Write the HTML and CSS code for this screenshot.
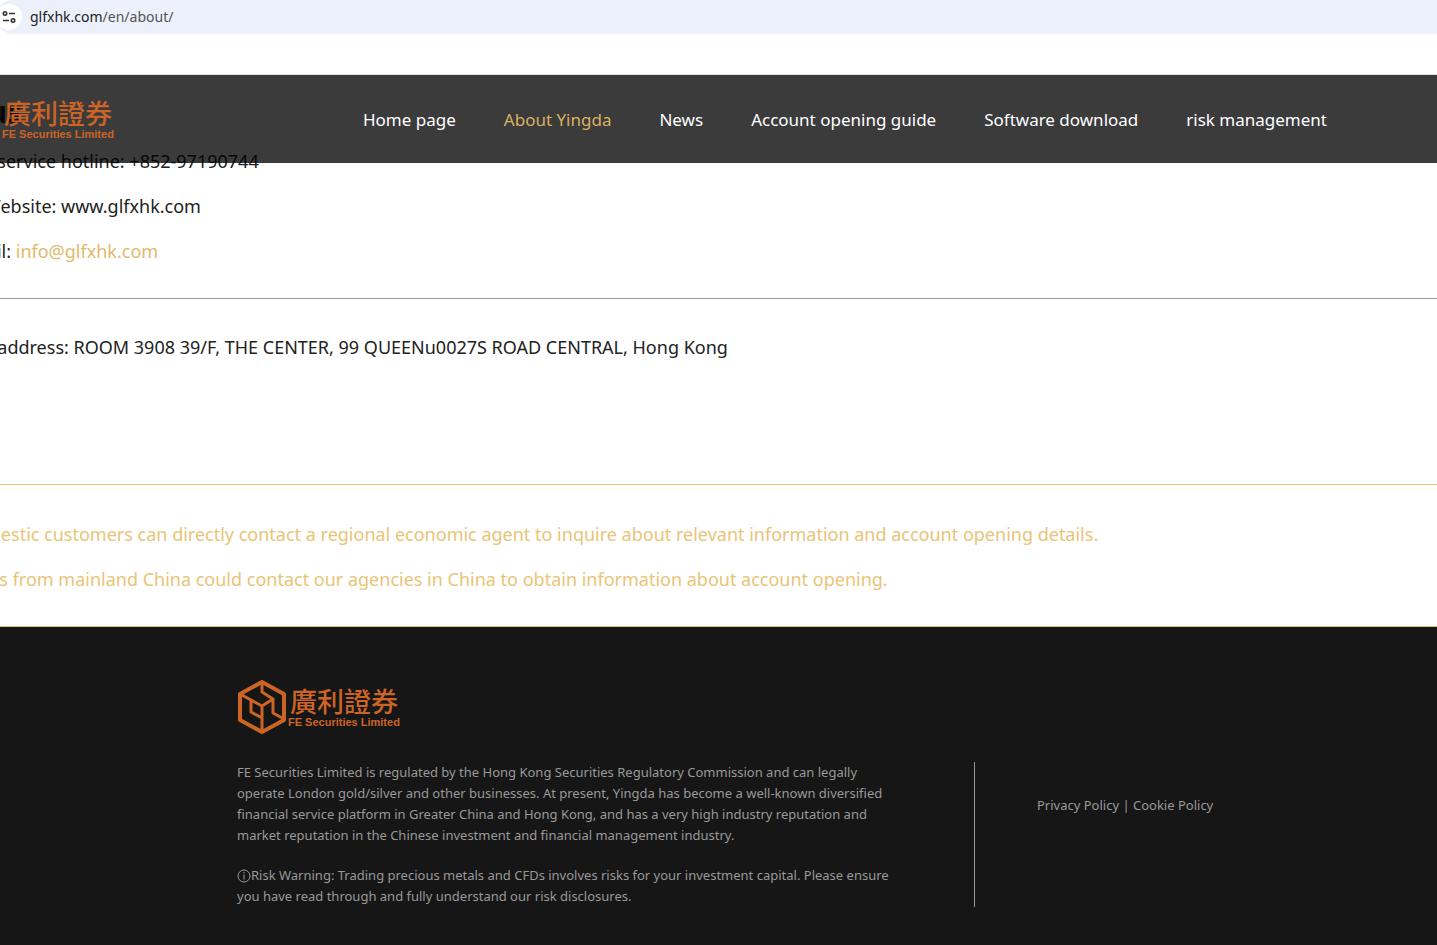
FILE: index.html
```html
<!DOCTYPE html>
<html lang="en">
<head>
  <meta charset="UTF-8">
  <meta name="viewport" content="width=device-width, initial-scale=1.0">
  <title>About Yingda</title>
  <link rel="stylesheet" href="styles.css">
</head>
<body>

  <!-- address bar -->
  <div class="address-bar">
    <button class="site-info" aria-label="View site information">
      <svg viewBox="0 0 14 14" width="14" height="14" fill="none" stroke="#333" stroke-width="1.6">
        <circle cx="3" cy="3.500" r="1.7"/>
        <path d="M7 3.500h6M1 10.500h6"/>
        <circle cx="11" cy="10.500" r="1.7"/>
      </svg>
    </button>
    <a class="url" href="#">glfxhk.com<span>/en/about/</span></a>
  </div>

  <div class="page">
    <header class="header">
      <a class="logo" href="#">
        <svg class="logo-mark" viewBox="0 0 50 56" fill="none" stroke="#cc6426" stroke-width="4" stroke-linejoin="round">
          <path d="M25 3L47 15V41L25 53L3 41V15Z"/>
          <path stroke-width="3" d="M3 15L25 27L36 20L25 13V3M25 27V53M14 21V33L25 39M36 20V34L47 40"/>
        </svg>
        <span class="logo-text">
          <span class="logo-cn" lang="zh-Hant">廣利證券</span>
          <span class="logo-en">FE Securities Limited</span>
        </span>
      </a>
      <nav class="nav">
        <a href="#">Home page</a>
        <a class="active" href="#">About Yingda</a>
        <a href="#">News</a>
        <a href="#">Account opening guide</a>
        <a href="#">Software download</a>
        <a href="#">risk management</a>
      </nav>
    </header>

    <main class="content">
      <section class="contact">
        <h2>Plus</h2>
        <p>Our service hotline: +852-97190744</p>
        <p>FE Website: www.glfxhk.com</p>
        <p>Email: <a href="mailto:info@glfxhk.com">info@glfxhk.com</a></p>
      </section>
      <section class="address">
        <p>Our address: ROOM 3908 39/F, THE CENTER, 99 QUEENu0027S ROAD CENTRAL, Hong Kong</p>
      </section>
      <section class="notice">
        <p>Domestic customers can directly contact a regional economic agent to inquire about relevant information and account opening details.</p>
        <p>Users from mainland China could contact our agencies in China to obtain information about account opening.</p>
      </section>
    </main>
  </div>

  <footer class="footer">
    <a class="logo" href="#">
      <svg class="logo-mark" viewBox="0 0 50 56" fill="none" stroke="#cc6426" stroke-width="4" stroke-linejoin="round">
        <path d="M25 3L47 15V41L25 53L3 41V15Z"/>
        <path stroke-width="3" d="M3 15L25 27L36 20L25 13V3M25 27V53M14 21V33L25 39M36 20V34L47 40"/>
      </svg>
      <span class="logo-text">
        <span class="logo-cn" lang="zh-Hant">廣利證券</span>
        <span class="logo-en">FE Securities Limited</span>
      </span>
    </a>
    <div class="footer-row">
      <div class="footer-info">
        <p>FE Securities Limited is regulated by the Hong Kong Securities Regulatory Commission and can legally operate London gold/silver and other businesses. At present, Yingda has become a well-known diversified financial service platform in Greater China and Hong Kong, and has a very high industry reputation and market reputation in the Chinese investment and financial management industry.</p>
        <p><svg class="info-icon" viewBox="0 0 14 14" fill="none" stroke="currentColor"><circle cx="7" cy="7" r="6"/><path d="M7 3v1.500M7 5.500v5"/></svg>Risk Warning: Trading precious metals and CFDs involves risks for your investment capital. Please ensure you have read through and fully understand our risk disclosures.</p>
      </div>
      <div class="footer-links">
        <a href="#">Privacy Policy</a> | <a href="#">Cookie Policy</a>
      </div>
    </div>
  </footer>

</body>
</html>
```
FILE: styles.css
```css
* {
  box-sizing: border-box;
}

body {
  margin: 0;
  font-family: "Noto Sans", "Open Sans", "Noto Sans CJK TC", sans-serif;
  background: #fff;
  color: #222;
  overflow-x: hidden;
}

a {
  color: inherit;
  text-decoration: none;
}

p {
  margin: 0;
}

.address-bar {
  display: flex;
  align-items: center;
  gap: 8px;
  height: 34px;
  margin-left: -4px;
  background: #ecf0fa;
  border-radius: 17px 0 0 17px;
}

.site-info {
  display: flex;
  align-items: center;
  justify-content: center;
  width: 26px;
  height: 26px;
  padding: 0;
  border: none;
  border-radius: 50%;
  background: #fff;
}

.url {
  font-size: 14px;
  line-height: 20px;
  padding-bottom: 1px;
  color: #222;
}

.url span {
  color: #555;
}

.page {
  position: relative;
  margin-top: 40px;
  border-top: 1px solid #ddd;
  overflow: hidden;
}

/* translucent bar over the scrolled content */
.header {
  position: absolute;
  top: 0;
  left: 0;
  right: 0;
  z-index: 1;
  display: flex;
  align-items: center;
  justify-content: space-between;
  height: 88px;
  padding-right: 110px;
  margin-left: -49px;
  background: rgba(0, 0, 0, 0.77);
}

.nav {
  display: flex;
  gap: 48px;
  font-size: 17px;
  color: #fff;
}

.nav .active {
  color: #d9b062;
}

.logo {
  display: flex;
  align-items: center;
  gap: 1px;
  width: max-content;
  color: #cc6426;
}

.logo-mark {
  width: 50px;
  height: 56px;
}

.logo-text {
  display: flex;
  flex-direction: column;
}

.logo-cn {
  padding-left: 2px;
  font-family: "Noto Sans CJK TC", sans-serif;
  font-size: 27px;
  font-weight: 500;
  line-height: 30px;
}

.logo-en {
  font-family: "Liberation Sans", Arial, sans-serif;
  font-size: 11px;
  font-weight: bold;
  line-height: 13px;
}

.content {
  font-size: 18px;
  line-height: 45px;
}

.contact,
.address,
.notice {
  padding-left: 40px;
  margin-left: -80px;
}

.contact {
  padding-bottom: 24px;
  border-bottom: 1px solid #999;
}

.contact h2 {
  margin: 0;
  padding-top: 14px;
  padding-bottom: 5px;
  font-size: 30px;
}

.contact a {
  color: #e2b96b;
}

.address {
  padding-top: 26px;
  padding-bottom: 114px;
}

.notice {
  padding-top: 27px;
  padding-bottom: 24px;
  border-top: 1px solid #e9c36f;
  border-bottom: 1px solid #e9c36f;
  color: #e9c477;
}

.footer {
  min-height: 318px;
  padding: 52px 219px 38px 237px;
  background: #161616;
  color: #999;
  font-size: 13px;
}

.footer-row {
  display: flex;
  align-items: stretch;
  margin-top: 27px;
}

.footer-info {
  flex: 1;
  padding-right: 72px;
  border-right: 1px solid #999;
  line-height: 21px;
}

.footer-info p + p {
  margin-top: 19px;
}

.info-icon {
  width: 14px;
  height: 14px;
  vertical-align: -3px;
}

.footer-links {
  width: 243px;
  padding-left: 62px;
  padding-top: 33px;
  line-height: 21px;
}
```
